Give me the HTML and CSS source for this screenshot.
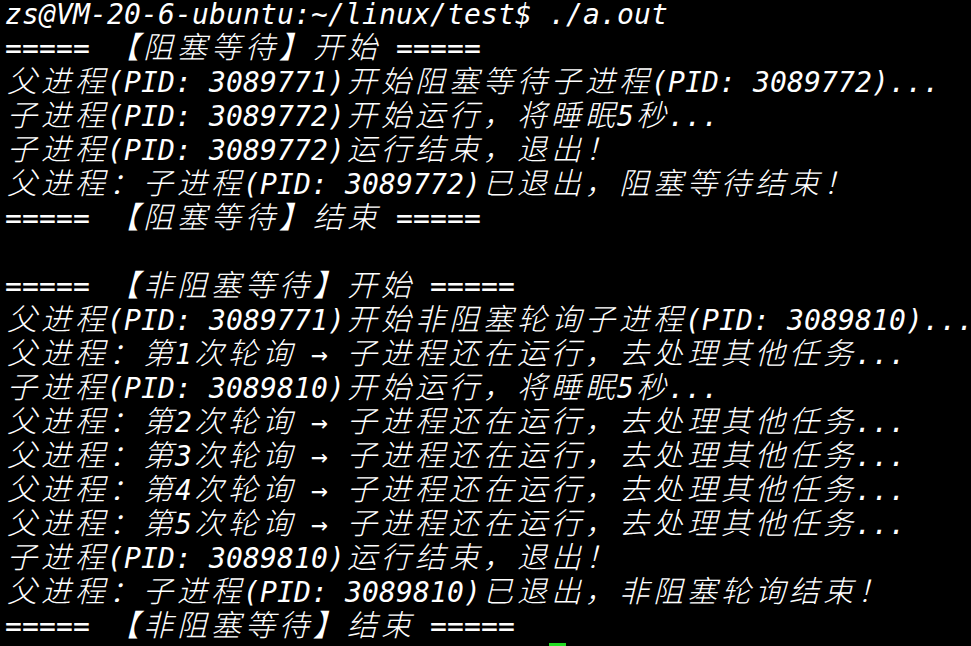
FILE: index.html
```html
<!DOCTYPE html>
<html lang="zh-CN">
<head>
<meta charset="utf-8">
<title>terminal</title>
<link rel="stylesheet" href="styles.css">
</head>
<body>
<div class="term">
<div class="ln">zs@VM-20-6-ubuntu:~/linux/test$ ./a.out</div>
<div class="ln">===== <span class="w">【阻塞等待】开始</span> =====</div>
<div class="ln"><span class="w">父进程</span>(PID: 3089771)<span class="w">开始阻塞等待子进程</span>(PID: 3089772)...</div>
<div class="ln"><span class="w">子进程</span>(PID: 3089772)<span class="w">开始运行，将睡眠</span>5<span class="w">秒</span>...</div>
<div class="ln"><span class="w">子进程</span>(PID: 3089772)<span class="w">运行结束，退出！</span></div>
<div class="ln"><span class="w">父进程：子进程</span>(PID: 3089772)<span class="w">已退出，阻塞等待结束！</span></div>
<div class="ln">===== <span class="w">【阻塞等待】结束</span> =====</div>
<div class="ln"></div>
<div class="ln">===== <span class="w">【非阻塞等待】开始</span> =====</div>
<div class="ln"><span class="w">父进程</span>(PID: 3089771)<span class="w">开始非阻塞轮询子进程</span>(PID: 3089810)...</div>
<div class="ln"><span class="w">父进程：第</span>1<span class="w">次轮询</span> → <span class="w">子进程还在运行，去处理其他任务</span>...</div>
<div class="ln"><span class="w">子进程</span>(PID: 3089810)<span class="w">开始运行，将睡眠</span>5<span class="w">秒</span>...</div>
<div class="ln"><span class="w">父进程：第</span>2<span class="w">次轮询</span> → <span class="w">子进程还在运行，去处理其他任务</span>...</div>
<div class="ln"><span class="w">父进程：第</span>3<span class="w">次轮询</span> → <span class="w">子进程还在运行，去处理其他任务</span>...</div>
<div class="ln"><span class="w">父进程：第</span>4<span class="w">次轮询</span> → <span class="w">子进程还在运行，去处理其他任务</span>...</div>
<div class="ln"><span class="w">父进程：第</span>5<span class="w">次轮询</span> → <span class="w">子进程还在运行，去处理其他任务</span>...</div>
<div class="ln"><span class="w">子进程</span>(PID: 3089810)<span class="w">运行结束，退出！</span></div>
<div class="ln"><span class="w">父进程：子进程</span>(PID: 3089810)<span class="w">已退出，非阻塞轮询结束！</span></div>
<div class="ln">===== <span class="w">【非阻塞等待】结束</span> =====</div>
<div class="ln">zs@VM-20-6-ubuntu:~/linux/test$ <span class="cursor"></span></div>
</div>
</body>
</html>
```
FILE: styles.css
```css
html, body {
  margin: 0;
  padding: 0;
  background: #000;
  overflow: hidden;
}

.term {
  margin-top: -2px;
  padding-left: 5px;
  font-family: "DejaVu Sans Mono", "Noto Sans CJK SC", monospace;
  font-size: 28px;
  line-height: 34px;
  font-style: italic;
  letter-spacing: 0.14px;
  color: #fff;
}

.ln {
  height: 34px;
  white-space: pre;
}

.w {
  font-family: "Noto Sans CJK SC", sans-serif;
  font-size: 30px;
  font-weight: 300;
  line-height: 0;
  letter-spacing: 4px;
  padding-left: 2px;
  margin-right: -2px;
}

.cursor {
  display: inline-block;
  width: 17px;
  height: 34px;
  vertical-align: top;
  margin-top: -1px;
  background: #22dd22;
}
```
